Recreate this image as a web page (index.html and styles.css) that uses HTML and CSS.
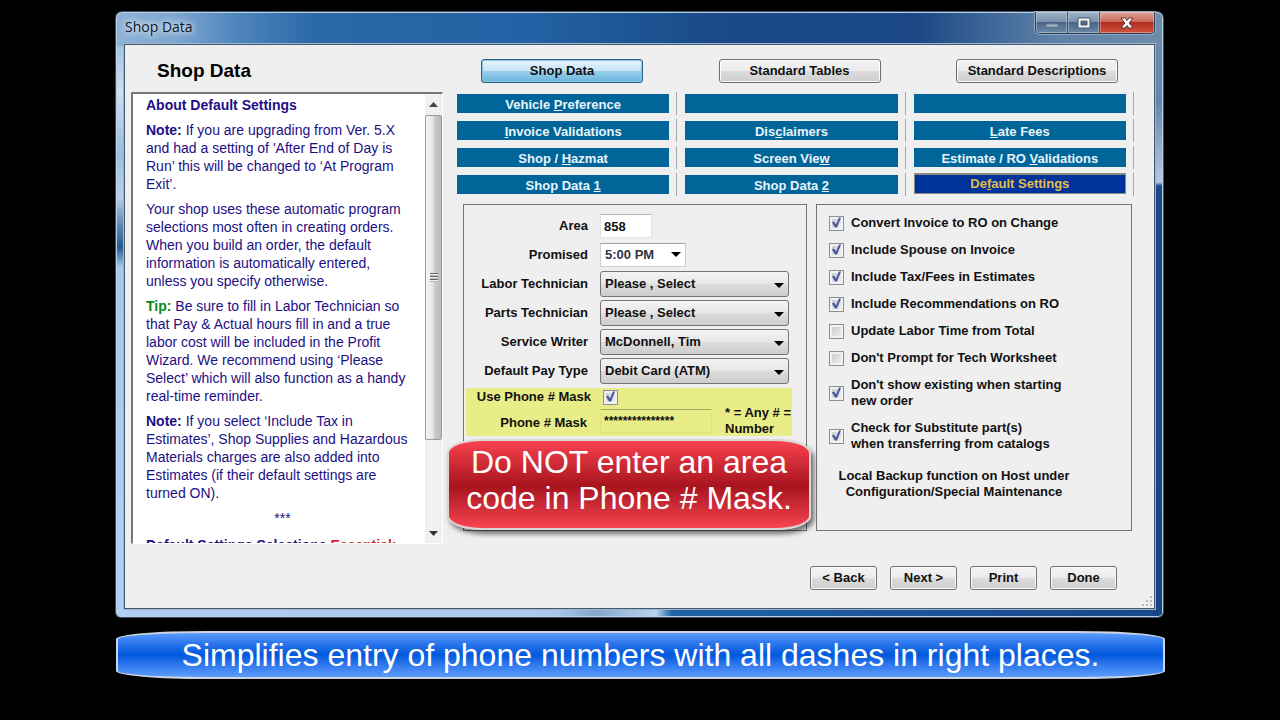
FILE: index.html
```html
<!DOCTYPE html>
<html lang="en">
<head>
<meta charset="utf-8">
<title>Shop Data</title>
<link rel="stylesheet" href="styles.css">
</head>
<body>
<main class="window">
  <header class="titlebar">
    <span class="titlebar-text">Shop Data</span>
    <div class="window-controls">
      <button class="wc wc-min" aria-label="Minimize"><svg width="14" height="14" viewBox="0 0 14 14"><rect x="1" y="8" width="12" height="3" fill="#a9bacb" stroke="#64778c" stroke-width="1"/></svg></button>
      <button class="wc wc-max" aria-label="Maximize"><svg width="14" height="12" viewBox="0 0 14 12"><path fill-rule="evenodd" d="M1 1h12v10H1zM4 4v4h6V4z" fill="#f4f4f4" stroke="#47566b" stroke-width="1"/></svg></button>
      <button class="wc wc-close" aria-label="Close"><svg width="14" height="12" viewBox="0 0 14 12"><path d="M1 1h4l2 2.500L9 1h4L9.200 6 13 11H9L7 8.500 5 11H1l3.800-5z" fill="#fff" stroke="#63323a" stroke-width="1"/></svg></button>
    </div>
  </header>

  <div class="client">
    <section class="side">
      <h1 class="page-title">Shop Data</h1>
      <div class="help">
        <div class="help-text">
          <p><b>About Default Settings</b></p>
          <p><b>Note:</b> If you are upgrading from Ver. 5.X<br>and had a setting of 'After End of Day is<br>Run’ this will be changed to ‘At Program<br>Exit’.</p>
          <p>Your shop uses these automatic program<br>selections most often in creating orders.<br>When you build an order, the default<br>information is automatically entered,<br>unless you specify otherwise.</p>
          <p><b class="tip">Tip:</b> Be sure to fill in Labor Technician so<br>that Pay &amp; Actual hours fill in and a true<br>labor cost will be included in the Profit<br>Wizard. We recommend using ‘Please<br>Select’ which will also function as a handy<br>real-time reminder.</p>
          <p><b>Note:</b> If you select ‘Include Tax in<br>Estimates’, Shop Supplies and Hazardous<br>Materials charges are also added into<br>Estimates (if their default settings are<br>turned ON).</p>
          <p class="stars">***</p>
          <p><b>Default Settings Selections <span class="alert">Essential:</span></b></p>
        </div>
        <div class="scrollbar">
          <svg class="arrow" width="9" height="5" viewBox="0 0 9 5"><path d="M0 5 4.500 0 9 5z" fill="#444"/></svg>
          <div class="thumb"><span class="grip"></span></div>
          <svg class="arrow" width="9" height="5" viewBox="0 0 9 5"><path d="M0 0h9L4.500 5z" fill="#333"/></svg>
        </div>
      </div>
    </section>

    <section class="content">
      <nav class="top-buttons">
        <button class="btn btn-top btn-active">Shop Data</button>
        <button class="btn btn-top">Standard Tables</button>
        <button class="btn btn-top">Standard Descriptions</button>
      </nav>

      <nav class="tabs">
        <div class="cell"><button class="tab">Vehicle <u>P</u>reference</button></div>
        <div class="cell"><button class="tab" aria-label="Empty tab"></button></div>
        <div class="cell"><button class="tab" aria-label="Empty tab"></button></div>
        <div class="cell"><button class="tab"><u>I</u>nvoice Validations</button></div>
        <div class="cell"><button class="tab">Dis<u>c</u>laimers</button></div>
        <div class="cell"><button class="tab"><u>L</u>ate Fees</button></div>
        <div class="cell"><button class="tab">Shop / <u>H</u>azmat</button></div>
        <div class="cell"><button class="tab">Screen Vie<u>w</u></button></div>
        <div class="cell"><button class="tab">Estimate / RO <u>V</u>alidations</button></div>
        <div class="cell"><button class="tab">Shop Data <u>1</u></button></div>
        <div class="cell"><button class="tab">Shop Data <u>2</u></button></div>
        <div class="cell cell-current"><button class="tab tab-current">De<u>f</u>ault Settings</button></div>
      </nav>

      <div class="panels">
        <form class="panel form-panel">
          <div class="rows">
            <div class="row"><label for="area">Area</label><input class="text area" id="area" value="858"></div>
            <div class="row"><label for="promised">Promised</label><div class="pick pick-time"><select id="promised"><option>5:00 PM</option></select></div></div>
            <div class="row"><label for="labor">Labor Technician</label><div class="pick"><select id="labor"><option>Please , Select</option></select></div></div>
            <div class="row"><label for="parts">Parts Technician</label><div class="pick"><select id="parts"><option>Please , Select</option></select></div></div>
            <div class="row"><label for="writer">Service Writer</label><div class="pick"><select id="writer"><option>McDonnell, Tim</option></select></div></div>
            <div class="row"><label for="pay">Default Pay Type</label><div class="pick"><select id="pay"><option>Debit Card (ATM)</option></select></div></div>
          </div>
          <div class="mask">
            <div class="mask-row"><label for="usemask">Use Phone # Mask</label><input class="check" type="checkbox" id="usemask" checked></div>
            <div class="mask-row"><label class="mask-label" for="mask">Phone # Mask</label><input class="text mask-input" id="mask" value="***************"><span class="mask-note">* = Any # =<br>Number</span></div>
          </div>
          <div class="callout callout-red">Do NOT enter an area<br>code in Phone # Mask.</div>
        </form>

        <form class="panel options-panel">
          <label class="option"><input class="check" type="checkbox" checked>Convert Invoice to RO on Change</label>
          <label class="option"><input class="check" type="checkbox" checked>Include Spouse on Invoice</label>
          <label class="option"><input class="check" type="checkbox" checked>Include Tax/Fees in Estimates</label>
          <label class="option"><input class="check" type="checkbox" checked>Include Recommendations on RO</label>
          <label class="option"><input class="check" type="checkbox">Update Labor Time from Total</label>
          <label class="option"><input class="check" type="checkbox">Don't Prompt for Tech Worksheet</label>
          <label class="option"><input class="check" type="checkbox" checked><span>Don't show existing when starting<br>new order</span></label>
          <label class="option"><input class="check" type="checkbox" checked><span>Check for Substitute part(s)<br>when transferring from catalogs</span></label>
          <p class="note">Local Backup function on Host under<br>Configuration/Special Maintenance</p>
        </form>
      </div>

      <footer class="actions">
        <button class="btn">&lt; Back</button>
        <button class="btn">Next &gt;</button>
        <button class="btn">Print</button>
        <button class="btn">Done</button>
      </footer>
    </section>
    <svg class="resize" width="11" height="11" viewBox="0 0 11 11"><path d="M8 0h2v2H8zM4 4h2v2H4zM8 4h2v2H8zM0 8h2v2H0zM4 8h2v2H4zM8 8h2v2H8z" fill="#bbb"/></svg>
  </div>
</main>
<div class="callout callout-blue">Simplifies entry of phone numbers with all dashes in right places.</div>
</body>
</html>
```
FILE: styles.css
```css
* { box-sizing: border-box; }

body {
  margin: 0;
  padding: 11px 116px 0 115px;
  background: #000;
  color: #111;
  font: bold 13px/16px "Liberation Sans", Arial, sans-serif;
}

p, h1 { margin: 0; }
button, input, select { font: inherit; color: inherit; margin: 0; padding: 0; }

/* Window frame */
.window {
  padding: 0 8px 8px;
  border: 1px solid #3c4f63;
  border-radius: 7px 7px 6px 6px;
  box-shadow: inset 0 0 0 1px #b9cfe6;
  background:
    linear-gradient(90deg, #8fb2d6 0, #7da6cf 60px, #4f86bc 120px, #2a68a8 200px, #2261a3 420px, #1a4a88 600px, #1b4785 800px, #5f82a8 940px, #6f8cab 100%) top / 100% 34px no-repeat,
    linear-gradient(#86aed2, #cfe0f2 80px, #9dbce0 140px, #b9d0ea 185px, #7d9cc4 205px, #1f5a90 235px, #a9c8ec 255px, #b2d0f5) left / 10px 100% no-repeat,
    linear-gradient(#6f8cab 0, #6785ab 90px, #b6c9e4 170px, #1c4a88 174px, #174482) right / 10px 100% no-repeat,
    linear-gradient(90deg, #b0cef2 0, #a9c8ec 440px, #86a8cc 480px, #b8d2ee 540px, #1f62a6 556px, #18488a) bottom / 100% 10px no-repeat;
}

.titlebar {
  display: flex;
  justify-content: space-between;
  align-items: flex-start;
  height: 32px;
}
.titlebar-text {
  padding-left: 1px;
  font: 14px/30px "Open Sans", "Noto Sans", sans-serif;
  color: #14181f;
  text-shadow: 0 0 8px #fff, 0 0 6px #dce8f4;
}
.window-controls {
  display: flex;
  height: 22px;
  border: 1px solid #2c3d55;
  border-top: 0;
  border-radius: 0 0 5px 5px;
  box-shadow: 0 0 0 1px #90a8c2;
  overflow: hidden;
}
.wc {
  display: flex;
  align-items: center;
  justify-content: center;
  width: 32px;
  border: 0;
  border-right: 1px solid #3b4d66;
  box-shadow: inset 0 0 0 1px #ffffff55;
  background: linear-gradient(#9eb1c6, #7d93ae 45%, #4a6687 50%, #6d89a8);
}
.wc-close {
  width: 54px;
  border-right: 0;
  background: linear-gradient(#dda399, #cb6c5c 45%, #b02c1c 50%, #cf5540);
}

.client {
  position: relative;
  display: flex;
  gap: 14px;
  padding: 14px 20px 18px 6px;
  border: 1px solid #44586e;
  box-shadow: 0 0 0 1px #9db5cd;
  background: #efefef;
}
.resize { position: absolute; right: 1px; bottom: 1px; }

/* Help column */
.side { flex: 0 0 312px; }
.page-title {
  padding-left: 26px;
  margin-bottom: 9px;
  color: #000;
  font-size: 19px;
  line-height: 24px;
}
.help {
  display: flex;
  height: 452px;
  border: 1px solid #fff;
  border-top: 2px solid #777;
  border-left: 2px solid #777;
  background: #fff;
}
.help-text {
  flex: 1;
  overflow: hidden;
  padding: 2px 0 0 13px;
  color: #1d0f85;
  font-size: 14px;
  font-weight: normal;
  line-height: 18px;
  white-space: nowrap;
}
.help-text p { margin-bottom: 7px; }
.tip { color: #0c8a16; }
.alert { color: #d81f2b; }
.help-text .stars {
  margin-bottom: 9px;
  padding-right: 6px;
  text-align: center;
}

.scrollbar {
  display: flex;
  flex: 0 0 17px;
  flex-direction: column;
  align-items: center;
  justify-content: space-between;
  padding: 8px 0 7px;
  background: #f0f0f0;
}
.thumb {
  display: flex;
  align-items: center;
  justify-content: center;
  width: 17px;
  height: 325px;
  margin-bottom: 84px;
  border: 1px solid #9a9a9a;
  border-radius: 2px;
  background: linear-gradient(90deg, #f5f5f5, #e6e6e8 45%, #c8c8cc 60%, #b9b9be);
}
.grip {
  width: 8px;
  height: 9px;
  background: repeating-linear-gradient(#666 0 1px, #eee 1px 2px, #bbb 2px 3px);
}

/* Buttons */
.btn {
  width: 67px;
  height: 24px;
  border: 1px solid #707070;
  border-radius: 3px;
  box-shadow: inset 0 0 0 1px #fbfbfb;
  background: linear-gradient(#f3f3f3, #ebebeb 48%, #dcdcdc 52%, #cecece);
}
.btn-top { width: 162px; }
.btn-active {
  border-color: #2c628b;
  box-shadow: inset 0 0 0 1px #8fc3e0;
  background: linear-gradient(#e6f4fc, #c6e5f6 48%, #98cfee 52%, #6cb4dc);
}

.content { flex: 1; min-width: 0; }
.top-buttons {
  display: flex;
  justify-content: space-between;
  padding: 0 16px 0 24px;
}

/* Tab grid */
.tabs {
  display: grid;
  grid-template-columns: repeat(3, 1fr);
  gap: 4px 8px;
  margin-top: 9px;
}
.cell {
  display: flex;
  height: 23px;
  padding: 2px 7px 2px 0;
  border-right: 1px solid #a6a6a6;
}
.tab {
  flex: 1;
  padding-top: 2px;
  border: 0;
  background: #006699;
  color: #e9f4fa;
}
.cell-current { padding-top: 0; }
.tab-current {
  padding-top: 0;
  border: 1px solid #8a8a80;
  border-top-width: 2px;
  background: #003399;
  color: #e6bb4c;
}

/* Panels */
.panels {
  display: grid;
  grid-template-columns: 344fr 316fr;
  gap: 9px;
  margin-top: 8px;
  padding: 0 2px 0 6px;
}
.panel {
  position: relative;
  height: 327px;
  border: 1px solid #747474;
}

.rows {
  display: grid;
  grid-auto-rows: 26px;
  gap: 3px;
  padding: 8px 17px 0 0;
}
.row {
  display: grid;
  grid-template-columns: 124px 1fr;
  align-items: center;
  gap: 12px;
  text-align: right;
}
.text {
  height: 24px;
  padding-left: 3px;
  border: 1px solid #e3e3e3;
  border-top-color: #b5b5b5;
  background: #fff;
}
.area { width: 52px; }

.pick { position: relative; height: 26px; }
.pick select {
  appearance: none;
  width: 100%;
  height: 100%;
  padding-left: 4px;
  border: 1px solid #747474;
  border-radius: 3px;
  background: linear-gradient(#f3f3f3, #e8e8e8 48%, #dcdcdc 52%, #cdcdcd);
}
.pick::after {
  content: "";
  position: absolute;
  top: 12px;
  right: 5px;
  border: 5px solid transparent;
  border-top-color: #000;
  border-bottom: 0;
  pointer-events: none;
}
.pick-time { width: 86px; height: 24px; }
.pick-time::after { top: 9px; }
.pick-time select {
  border: 1px solid #cfcfcf;
  border-top-color: #a0a0a0;
  border-radius: 0;
  background: #fff;
  color: #33343f;
}

.mask {
  margin: 4px 14px 0 2px;
  padding-top: 1px;
  height: 48px;
  background: #e9ed88;
}
.mask-row { display: flex; align-items: center; }
.mask-row label { width: 125px; text-align: right; }
.mask-row .check { margin-left: 12px; }
.mask-row .mask-label { width: 121px; padding-top: 4px; }
.mask-input {
  width: 112px;
  margin-left: 13px;
  border-color: #dfe379;
  border-top-color: #a8ab6c;
  background: transparent;
  font-size: 12px;
}
.mask-note { margin-left: 13px; white-space: nowrap; }

.check {
  appearance: none;
  flex: none;
  width: 15px;
  height: 15px;
  border: 1px solid #8c8f94;
  box-shadow: inset 0 0 0 2px #f2f2f2;
  background: linear-gradient(135deg, #c3c6cc, #f4f4f4);
}
.check:checked::after {
  content: "";
  display: block;
  width: 13px;
  height: 13px;
  background: #46559c;
  clip-path: polygon(2px 6px, 4px 5px, 6px 8px, 9px 1px, 11px 1px, 7px 11px, 5px 11px);
}

.options-panel {
  display: flex;
  flex-direction: column;
  gap: 11px;
  padding: 10px 12px 0;
}
.option { display: flex; align-items: center; gap: 7px; }
.note { margin-top: 5px; padding-right: 40px; text-align: center; }

.actions {
  display: flex;
  justify-content: flex-end;
  gap: 13px;
  margin-top: 35px;
  padding-right: 17px;
}

/* Caption banners */
.callout {
  color: #fff;
  font-size: 32px;
  font-weight: normal;
  text-align: center;
  white-space: nowrap;
}
.callout-red {
  position: absolute;
  top: 234px;
  left: -17px;
  right: -5px;
  padding: 3px 0 12px;
  border: 2px solid #ddd5d5;
  border-radius: 36px / 14px;
  box-shadow: 3px 4px 5px #0008;
  background: linear-gradient(#f9444f, #e03540 15%, #a8141e 52%, #c42733 70%, #f9444f);
  line-height: 36px;
}
.callout-blue {
  margin: 13px -1px 0 1px;
  border: 2px solid #ccd3e2;
  border-radius: 90px / 8px;
  background: linear-gradient(#5c9cfa, #2f78ee 22%, #0058dc 50%, #2f78ee 72%, #5c9cfa);
  line-height: 44px;
}
```
